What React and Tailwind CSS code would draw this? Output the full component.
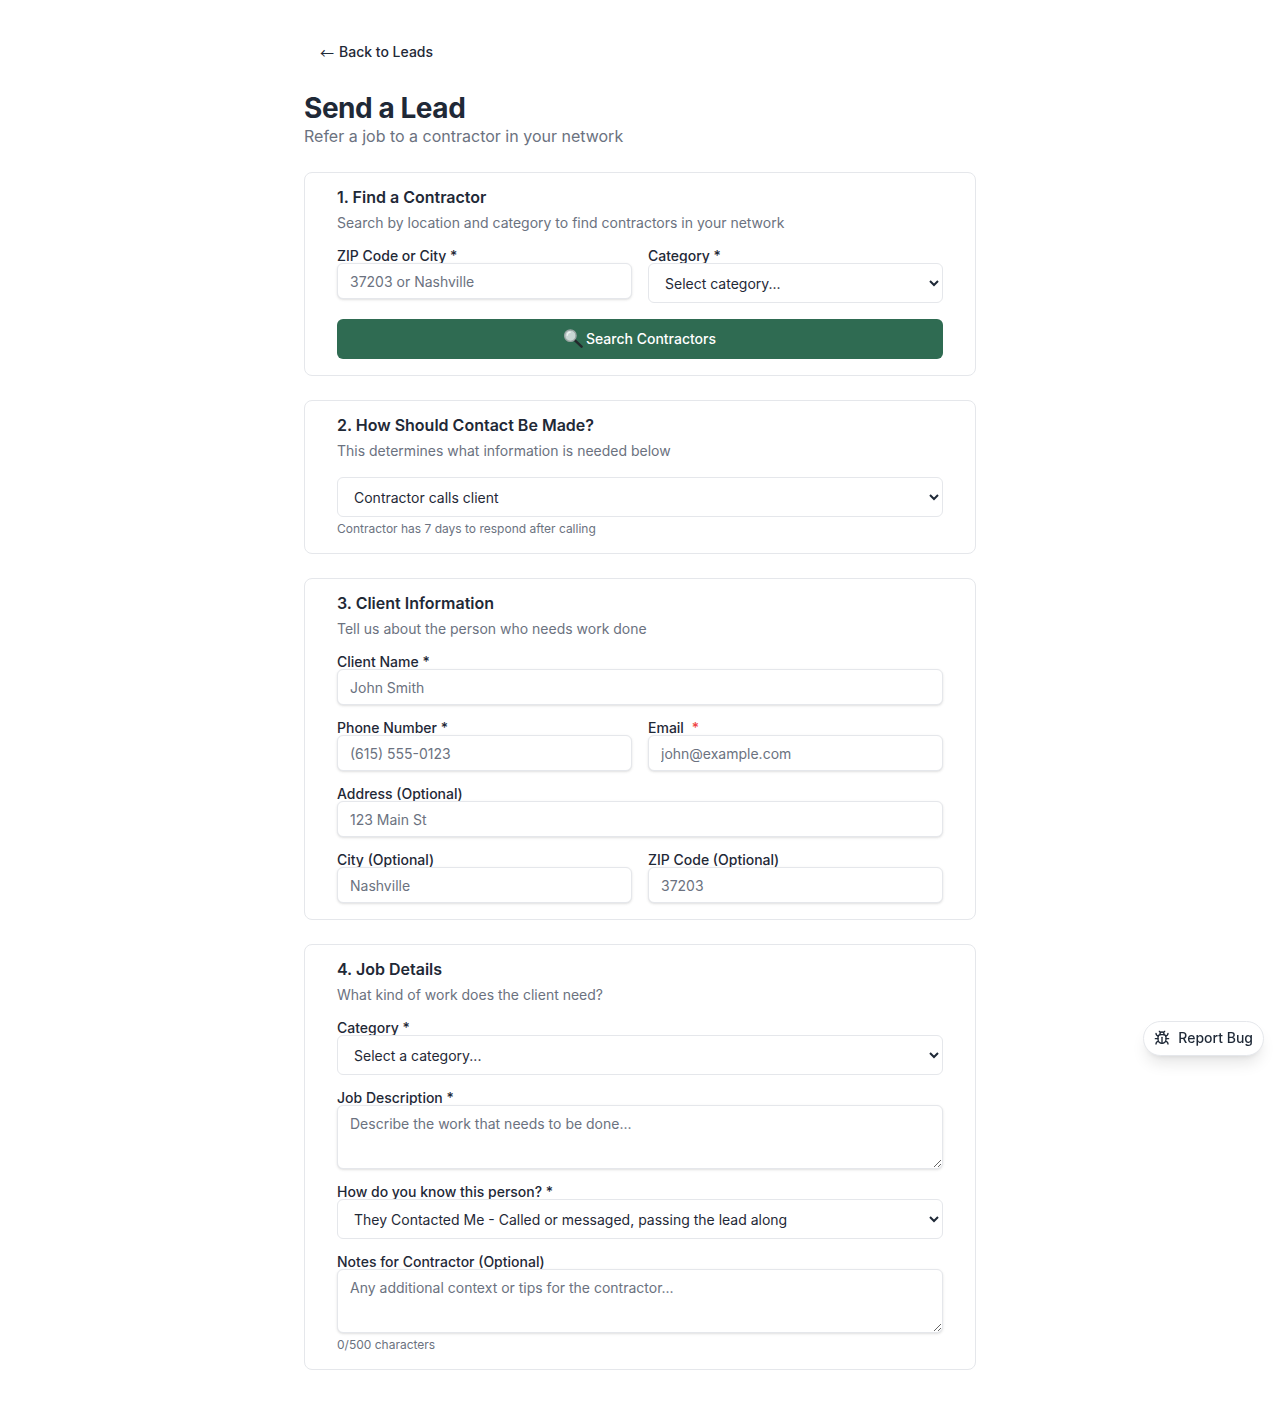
import { Bug } from "lucide-react";

const inputCls =
  "relative block w-full h-9 rounded-md border border-[#e5e7eb] bg-white px-3 py-1 text-sm text-[#1f2937] shadow-sm outline-none placeholder:text-[#6b7280]";
const selectCls =
  "relative block w-full h-10 rounded-md border border-[#e5e7eb] bg-white px-3 text-sm text-[#1f2937] outline-none";
const textareaCls =
  "relative block w-full h-16 rounded-md border border-[#e5e7eb] bg-white px-3 py-2 text-sm text-[#1f2937] shadow-sm outline-none placeholder:text-[#6b7280]";

const Label = ({ children }) => (
  <label className="block h-[14px] text-sm leading-[14px] font-medium text-[#1f2937]">{children}</label>
);

const Field = ({ label, children }) => (
  <div>
    <Label>{label}</Label>
    {children}
  </div>
);

const Card = ({ title, desc, children }) => (
  <section className="rounded-lg border border-[#e5e7eb] bg-white px-8 pt-4 pb-4">
    <h2 className="text-base leading-4 font-semibold text-[#1f2937]">{title}</h2>
    <p className="mt-2 text-sm leading-5 text-[#6b7280]">{desc}</p>
    {children}
  </section>
);

const SearchEmoji = () => (
  <svg viewBox="0 0 20 20" className="h-[19px] w-[19px] shrink-0 -translate-y-px">
    <line x1="11" y1="11.5" x2="18.5" y2="18.5" stroke="#23282c" strokeWidth="2.6" strokeLinecap="round" />
    <circle cx="6.7" cy="7" r="6" fill="#c9d6d4" stroke="#9aa5a4" strokeWidth="1.5" />
    <path d="M3.4 6.6a3.6 3.6 0 0 1 3.2-3.2" fill="none" stroke="#eef3f2" strokeWidth="1.3" strokeLinecap="round" />
  </svg>
);

const App = () => {
  return (
    <div className="min-h-screen bg-white font-['Inter',sans-serif]">
      <main className="mx-auto w-[672px] pt-[34px] pb-8">
        <a className="flex h-9 items-center px-4 text-sm font-medium text-[#1f2937]">
          <span className="font-['Noto_Sans_CJK_JP',sans-serif] font-normal">←</span>
          <span className="ml-[5px]">Back to Leads</span>
        </a>

        <h1 className="mt-[22px] text-[28px] leading-[32px] font-bold tracking-[-0.45px] text-[#1f2937]">Send a Lead</h1>
        <p className="text-base leading-6 text-[#6b7280]">Refer a job to a contractor in your network</p>

        <div className="mt-6 flex flex-col gap-6">
          <Card title="1. Find a Contractor" desc="Search by location and category to find contractors in your network">
            <div className="mt-4 grid grid-cols-2 gap-4">
              <Field label="ZIP Code or City *">
                <input className={inputCls} placeholder="37203 or Nashville" />
              </Field>
              <Field label="Category *">
                <select className={selectCls}>
                  <option>Select category...</option>
                </select>
              </Field>
            </div>
            <button className="mt-4 flex h-10 w-full items-center justify-center rounded-md bg-[#2f6b52] text-sm font-medium text-white">
              <SearchEmoji />
              <span className="ml-[3px]">Search Contractors</span>
            </button>
          </Card>

          <Card title="2. How Should Contact Be Made?" desc="This determines what information is needed below">
            <select className={`${selectCls} mt-4`}>
              <option>Contractor calls client</option>
            </select>
            <p className="mt-1 text-xs leading-4 text-[#6b7280]">Contractor has 7 days to respond after calling</p>
          </Card>

          <Card title="3. Client Information" desc="Tell us about the person who needs work done">
            <div className="mt-4 flex flex-col gap-4">
              <Field label="Client Name *">
                <input className={inputCls} placeholder="John Smith" />
              </Field>
              <div className="grid grid-cols-2 gap-4">
                <Field label="Phone Number *">
                  <input className={inputCls} placeholder="(615) 555-0123" />
                </Field>
                <Field
                  label={
                    <>
                      Email <span className="ml-1 text-[#ef4444]">*</span>
                    </>
                  }
                >
                  <input className={inputCls} placeholder="john@example.com" />
                </Field>
              </div>
              <Field label="Address (Optional)">
                <input className={inputCls} placeholder="123 Main St" />
              </Field>
              <div className="grid grid-cols-2 gap-4">
                <Field label="City (Optional)">
                  <input className={inputCls} placeholder="Nashville" />
                </Field>
                <Field label="ZIP Code (Optional)">
                  <input className={inputCls} placeholder="37203" />
                </Field>
              </div>
            </div>
          </Card>

          <Card title="4. Job Details" desc="What kind of work does the client need?">
            <div className="mt-4 flex flex-col gap-4">
              <Field label="Category *">
                <select className={selectCls}>
                  <option>Select a category...</option>
                </select>
              </Field>
              <Field label="Job Description *">
                <textarea className={textareaCls} placeholder="Describe the work that needs to be done..." />
              </Field>
              <Field label="How do you know this person? *">
                <select className={selectCls}>
                  <option>They Contacted Me - Called or messaged, passing the lead along</option>
                </select>
              </Field>
              <div>
                <Field label="Notes for Contractor (Optional)">
                  <textarea className={textareaCls} placeholder="Any additional context or tips for the contractor..." />
                </Field>
                <p className="mt-1 text-xs leading-4 text-[#6b7280]">0/500 characters</p>
              </div>
            </div>
          </Card>
        </div>
      </main>

      <button className="fixed top-[1021px] right-4 flex h-[35px] items-center gap-2 rounded-full border border-[#e5e7eb] bg-white px-[10px] pb-px text-sm font-medium text-[#1f2937] shadow-lg">
        <Bug size={16} />
        Report Bug
      </button>
    </div>
  );
};

export default App;
